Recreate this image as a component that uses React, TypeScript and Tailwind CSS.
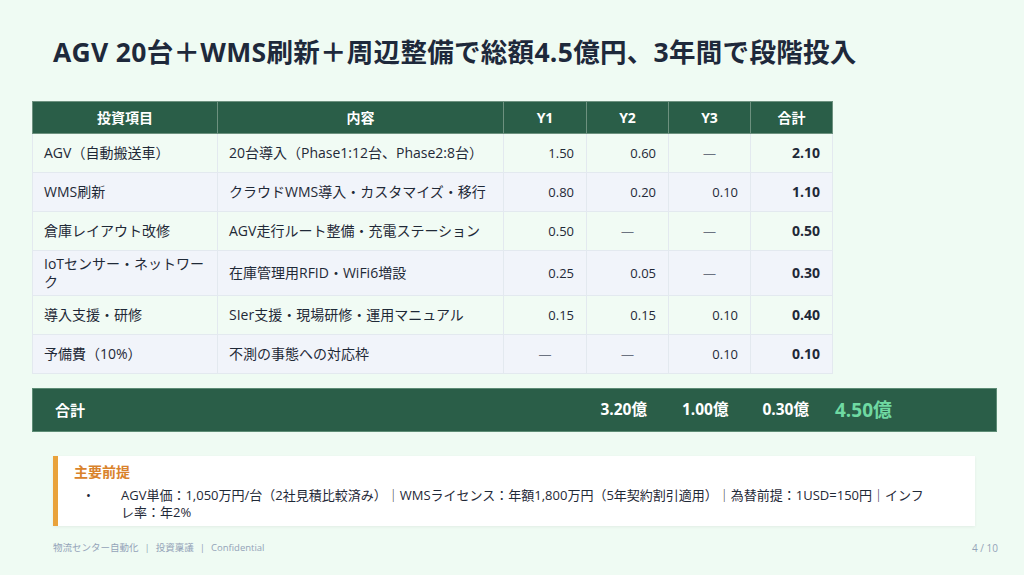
import React from "react";

const rows = [
  { item: "AGV（自動搬送車）", desc: "20台導入（Phase1:12台、Phase2:8台）", y1: "1.50", y2: "0.60", y3: "—", total: "2.10" },
  { item: "WMS刷新", desc: "クラウドWMS導入・カスタマイズ・移行", y1: "0.80", y2: "0.20", y3: "0.10", total: "1.10" },
  { item: "倉庫レイアウト改修", desc: "AGV走行ルート整備・充電ステーション", y1: "0.50", y2: "—", y3: "—", total: "0.50" },
  { item: "IoTセンサー・ネットワーク", desc: "在庫管理用RFID・WiFi6増設", y1: "0.25", y2: "0.05", y3: "—", total: "0.30" },
  { item: "導入支援・研修", desc: "SIer支援・現場研修・運用マニュアル", y1: "0.15", y2: "0.15", y3: "0.10", total: "0.40" },
  { item: "予備費（10%）", desc: "不測の事態への対応枠", y1: "—", y2: "—", y3: "0.10", total: "0.10" },
];

const NumCell = ({ v }: { v: string }) => (
  <td
    className={
      "border border-[#e3e9ef] px-[12px] py-[4px] text-[13px] " +
      (v === "—" ? "text-center text-[#6b7280]" : "text-right")
    }
  >
    {v}
  </td>
);

export default function App() {
  return (
    <div
      className="flex h-[575px] w-[1024px] flex-col overflow-hidden bg-[#effbf3] px-[32px] text-[#1f2937]"
      style={{ fontFamily: '"Open Sans", "Noto Sans CJK JP", sans-serif' }}
    >
      <h1 className="mt-[34px] pl-[21px] text-[26.5px] font-bold leading-[36px] tracking-[0.3px] text-[#1e293b]">
        AGV 20台＋WMS刷新＋周辺整備で総額4.5億円、3年間で段階投入
      </h1>

      <table className="mt-[31px] w-[800px] table-fixed border-collapse text-[14px] leading-[18px]">
        <colgroup>
          <col className="w-[185px]" />
          <col className="w-[286px]" />
          <col className="w-[83px]" />
          <col className="w-[82px]" />
          <col className="w-[82px]" />
          <col className="w-[82px]" />
        </colgroup>
        <thead>
          <tr className="h-[32px] bg-[#2a5e48] font-bold text-white">
            {["投資項目", "内容", "Y1", "Y2", "Y3", "合計"].map((h) => (
              <th key={h} className="border border-[#6d917f] px-[10px] text-center">
                {h}
              </th>
            ))}
          </tr>
        </thead>
        <tbody>
          {rows.map((r, i) => (
            <tr
              key={r.item}
              className={"h-[39px] " + (i % 2 === 0 ? "bg-[#f1fbf4]" : "bg-[#f1f4fa]")}
            >
              <td className="border border-[#e3e9ef] py-[4px] pl-[11px] pr-[10px]">{r.item}</td>
              <td className="border border-[#e3e9ef] py-[4px] pl-[11px] pr-[10px]">{r.desc}</td>
              <NumCell v={r.y1} />
              <NumCell v={r.y2} />
              <NumCell v={r.y3} />
              <td className="border border-[#e3e9ef] px-[12px] py-[4px] text-right text-[14px] font-bold">
                {r.total}
              </td>
            </tr>
          ))}
        </tbody>
      </table>

      <div className="mt-[14px] flex h-[44px] w-[965px] items-center border border-[#5d8c75] bg-[#2a5e48] pl-[22px] pr-[104px] font-bold text-white">
        <span className="text-[15px]">合計</span>
        <div className="ml-auto flex items-center text-[15.5px]">
          <span>3.20億</span>
          <span className="ml-[35px]">1.00億</span>
          <span className="ml-[34px]">0.30億</span>
          <span className="ml-[26px] text-[19px] text-[#6fd9a2]">4.50億</span>
        </div>
      </div>

      <div className="ml-[21px] mt-[24px] w-[922px] border-l-[5px] border-[#e9a23b] bg-white pb-[5px] pl-[16px] pr-[44px] pt-[5px] shadow-[0_1px_3px_rgba(0,0,0,0.06)]">
        <div className="text-[14px] font-bold leading-[22px] text-[#d9822b]">主要前提</div>
        <div className="mt-[4px] flex text-[13px] leading-[17px] text-[#1f2937]">
          <span className="w-[47px] shrink-0 pl-[12px]">•</span>
          <span>
            AGV単価：1,050万円/台（2社見積比較済み）｜WMSライセンス：年額1,800万円（5年契約割引適用）｜為替前提：1USD=150円｜インフレ率：年2%
          </span>
        </div>
      </div>

      <div className="ml-[21px] mt-[15px] flex w-[945px] items-center justify-between text-[9.5px] text-[#94a3b8]">
        <span>
          物流センター自動化<span className="mx-[6px]">|</span>投資稟議<span className="mx-[6px]">|</span>Confidential
        </span>
        <span className="text-[10px]">4 / 10</span>
      </div>
    </div>
  );
}
